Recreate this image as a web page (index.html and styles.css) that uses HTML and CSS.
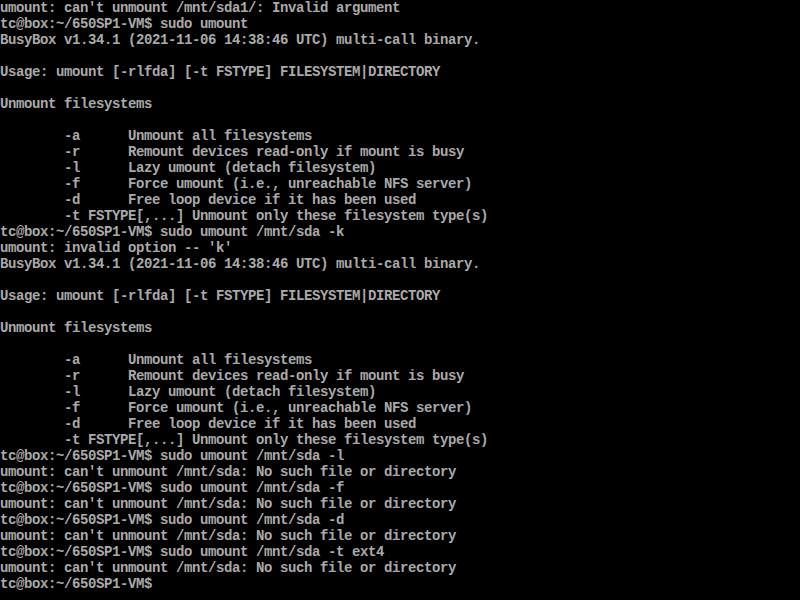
FILE: index.html
```html
<!DOCTYPE html>
<html>
<head>
<meta charset="utf-8">
<link rel="stylesheet" href="styles.css">
</head>
<body>
<pre class="term">umount: can't unmount /mnt/sda1/: Invalid argument
tc@box:~/650SP1-VM$ sudo umount
BusyBox v1.34.1 (2021-11-06 14:38:46 UTC) multi-call binary.

Usage: umount [-rlfda] [-t FSTYPE] FILESYSTEM|DIRECTORY

Unmount filesystems

        -a      Unmount all filesystems
        -r      Remount devices read-only if mount is busy
        -l      Lazy umount (detach filesystem)
        -f      Force umount (i.e., unreachable NFS server)
        -d      Free loop device if it has been used
        -t FSTYPE[,...] Unmount only these filesystem type(s)
tc@box:~/650SP1-VM$ sudo umount /mnt/sda -k
umount: invalid option -- 'k'
BusyBox v1.34.1 (2021-11-06 14:38:46 UTC) multi-call binary.

Usage: umount [-rlfda] [-t FSTYPE] FILESYSTEM|DIRECTORY

Unmount filesystems

        -a      Unmount all filesystems
        -r      Remount devices read-only if mount is busy
        -l      Lazy umount (detach filesystem)
        -f      Force umount (i.e., unreachable NFS server)
        -d      Free loop device if it has been used
        -t FSTYPE[,...] Unmount only these filesystem type(s)
tc@box:~/650SP1-VM$ sudo umount /mnt/sda -l
umount: can't unmount /mnt/sda: No such file or directory
tc@box:~/650SP1-VM$ sudo umount /mnt/sda -f
umount: can't unmount /mnt/sda: No such file or directory
tc@box:~/650SP1-VM$ sudo umount /mnt/sda -d
umount: can't unmount /mnt/sda: No such file or directory
tc@box:~/650SP1-VM$ sudo umount /mnt/sda -t ext4
umount: can't unmount /mnt/sda: No such file or directory
tc@box:~/650SP1-VM$</pre>
</body>
</html>
```
FILE: styles.css
```css
html, body {
  margin: 0;
  padding: 0;
  background: #000;
  width: 800px;
  height: 600px;
  overflow: hidden;
}
.term {
  margin: 0;
  padding: 0;
  color: #aaaaaa;
  font-family: "Liberation Mono", "DejaVu Sans Mono", monospace;
  font-size: 14px;
  letter-spacing: -0.4px;
  line-height: 16px;
  font-weight: bold;
  white-space: pre;
}
```
